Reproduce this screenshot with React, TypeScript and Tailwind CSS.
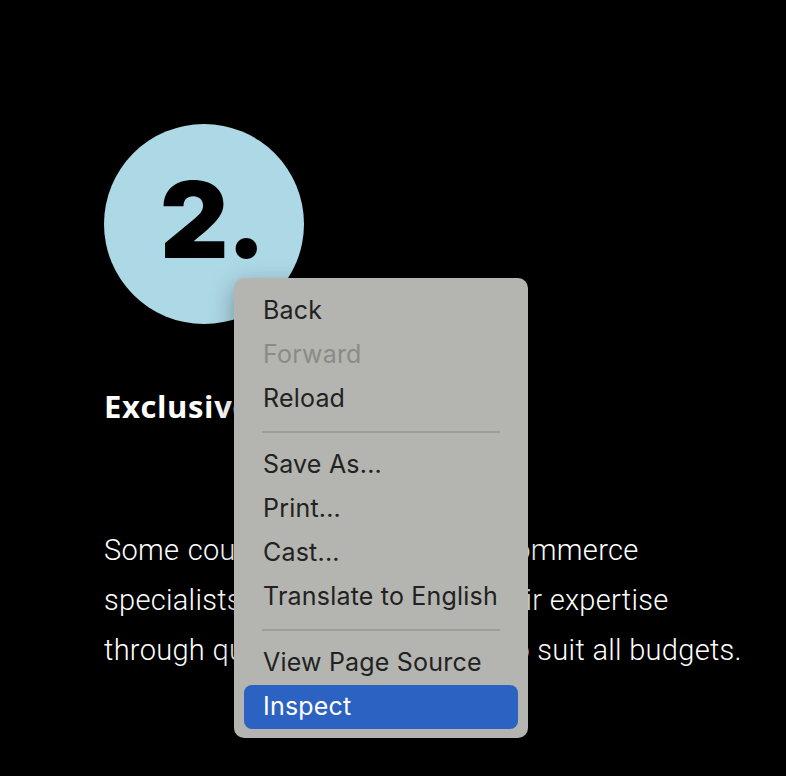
export default function App() {
    // Context menu items, null = separator
    const items: (string | null)[] = [
        "Back",
        "Forward",
        "Reload",
        null,
        "Save As...",
        "Print...",
        "Cast...",
        "Translate to English",
        null,
        "View Page Source",
        "Inspect",
    ];

    return (
        <main className="relative min-h-[776px] w-full overflow-hidden bg-black">
            <div className="pl-[104px] pt-[124px]">
                {/* Step badge */}
                <div className="flex h-[200px] w-[200px] items-center justify-center rounded-full bg-[#add8e6]">
                    <span
                        className="pb-[8px] pl-[16px] text-[106px] font-black leading-none tracking-[-2px] text-black"
                        style={{ fontFamily: "Inter, sans-serif" }}
                    >
                        2.
                    </span>
                </div>

                <h2
                    className="mt-[62px] text-[31px] font-bold leading-[40px] tracking-[0.6px] text-white"
                    style={{ fontFamily: "'Open Sans', 'Liberation Sans', sans-serif" }}
                >
                    Exclusive courses
                </h2>

                <div
                    className="mt-[99px] whitespace-nowrap text-[29px] font-light leading-[50px] tracking-[0.3px] text-white"
                    style={{ fontFamily: "Roboto, 'Liberation Sans', sans-serif" }}
                >
                    <p className="[word-spacing:1px]">Some courses are taught by eCommerce</p>
                    <p>specialists who love to share their expertise</p>
                    <p>through quality courses priced to suit all budgets.</p>
                </div>
            </div>

            {/* Context menu */}
            <div
                className="absolute left-[234px] top-[278px] w-[294px] rounded-[10px] bg-[#b4b5b0] px-[10px] pb-[9px] pt-[11px] shadow-[0_8px_24px_rgba(0,0,0,0.35)]"
                style={{ fontFamily: "Inter, 'Liberation Sans', sans-serif" }}
            >
                {items.map((it, i) =>
                    it === null ? (
                        <div key={i} className="flex h-[22px] items-center px-[18px]">
                            <div className="h-[2px] w-full bg-[#9d9e9a]" />
                        </div>
                    ) : (
                        <div
                            key={i}
                            className={
                                "flex h-[44px] items-center whitespace-nowrap rounded-[8px] px-[19px] text-[25px] tracking-[0.2px] " +
                                (it === "Inspect"
                                    ? "bg-[#2c62c1] text-white"
                                    : it === "Forward"
                                    ? "text-[#8a8b88]"
                                    : "text-[#222222]")
                            }
                        >
                            {it}
                        </div>
                    )
                )}
            </div>
        </main>
    );
}
